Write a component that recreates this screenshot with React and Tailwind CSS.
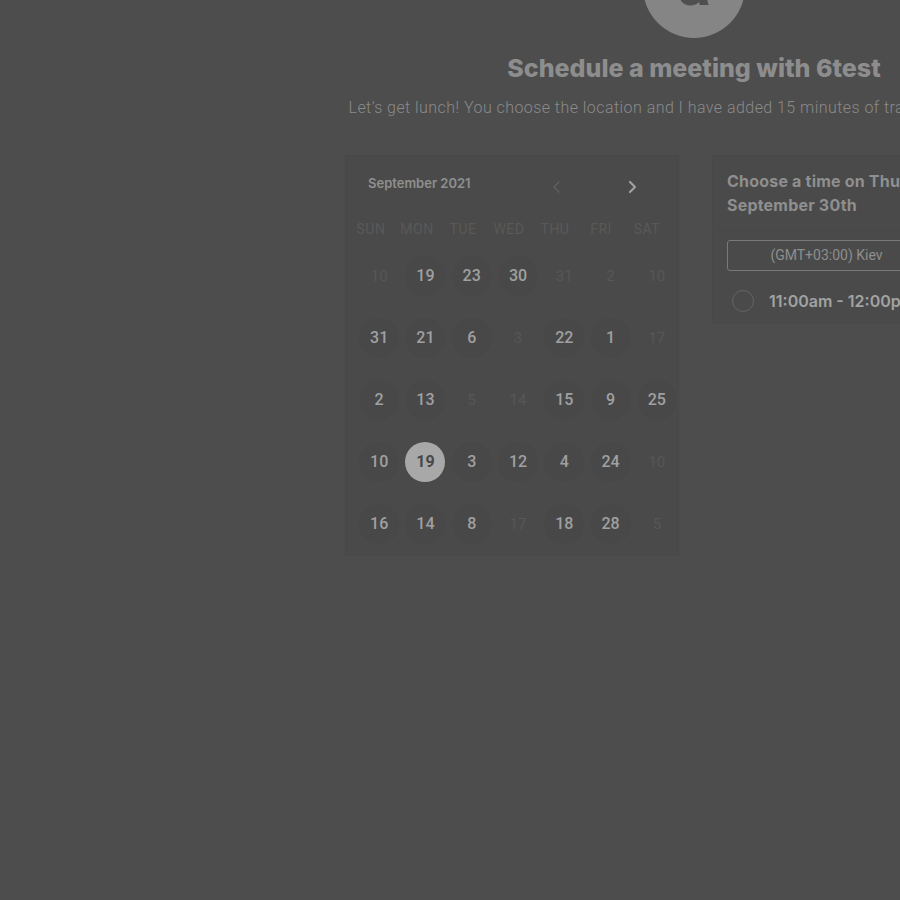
const weeks = [
  [[10, 'off'], [19], [23], [30], [31, 'off'], [2, 'off'], [10, 'off']],
  [[31], [21], [6], [3, 'off'], [22], [1], [17, 'off']],
  [[2], [13], [5, 'off'], [14, 'off'], [15], [9], [25]],
  [[10], [19, 'sel'], [3], [12], [4], [24], [10, 'off']],
  [[16], [14], [8], [17, 'off'], [18], [28], [5, 'off']],
];

const weekdays = ['SUN', 'MON', 'TUE', 'WED', 'THU', 'FRI', 'SAT'];

function Day({ n, state }) {
  if (state === 'off') {
    return (
      <div className="h-[62px] flex items-center justify-center">
        <span className="text-[15px] text-[#575757]">{n}</span>
      </div>
    );
  }
  if (state === 'sel') {
    return (
      <div className="h-[62px] flex items-center justify-center">
        <span className="w-10 h-10 rounded-full bg-[#a8a8a8] flex items-center justify-center text-[16px] font-bold text-[#484848]">
          {n}
        </span>
      </div>
    );
  }
  return (
    <div className="h-[62px] flex items-center justify-center">
      <span className="w-10 h-10 rounded-full bg-[#484848] flex items-center justify-center text-[16px] font-medium text-[#a0a0a0]">
        {n}
      </span>
    </div>
  );
}

function Chevron({ dir, color, width }) {
  return (
    <svg width="12" height="14" viewBox="0 0 12 14" fill="none">
      <path
        d={dir === 'left' ? 'M8 2 L3 7 L8 12' : 'M4 2 L9 7 L4 12'}
        stroke={color}
        strokeWidth={width}
        strokeLinecap="round"
        strokeLinejoin="round"
      />
    </svg>
  );
}

export default function App() {
  return (
    <div className="w-[900px] h-[900px] overflow-hidden bg-[#4d4d4d] font-['Inter',sans-serif]">
      <div className="w-[1388px] flex flex-col items-center">
        <div className="w-[102px] h-[102px] mt-[-64px] rounded-full bg-[#858585] flex items-start justify-center overflow-hidden">
          <span className="mt-[17px] text-[62px] leading-[62px] font-bold text-[#4f4f4f] font-['Roboto',sans-serif]">a</span>
        </div>

        <h1 className="mt-[14px] text-[25px] leading-[32px] font-extrabold text-[#8d8d8d]">
          Schedule a meeting with 6test
        </h1>

        <p className="mt-[13px] text-[16px] leading-[22px] font-light tracking-[0.45px] text-[#8a8a8a] font-['Roboto',sans-serif]">
          Let’s get lunch! You choose the location and I have added 15 minutes of travel time each way.
        </p>

        <div className="mt-[36px] flex gap-[33px] items-start">
          <div className="w-[334px] bg-[#4a4a4a] border border-[#484848] pt-[19px]">
            <div className="flex items-center pl-[22px] h-[18px]">
              <span className="text-[13px] font-semibold text-[#8f8f8f]">September 2021</span>
              <div className="ml-[80px] mt-[6px]">
                <Chevron dir="left" color="#5f5f5f" width={1.5} />
              </div>
              <div className="ml-[63px] mt-[6px]">
                <Chevron dir="right" color="#a0a0a0" width={2.2} />
              </div>
            </div>

            <div className="ml-[2px] mt-[26px] grid grid-cols-7 w-[322px]">
              {weekdays.map((d) => (
                <span
                  key={d}
                  className="text-center text-[14px] leading-[20px] tracking-[0.5px] text-[#595959] font-['Roboto',sans-serif]"
                >
                  {d}
                </span>
              ))}
            </div>

            <div className="ml-[10px] mt-[6px] w-[324px] grid grid-cols-7 font-['Roboto',sans-serif]">
              {weeks.map((row, i) =>
                row.map(([n, state], j) => <Day key={i + '-' + j} n={n} state={state} />)
              )}
            </div>
          </div>

          <div className="w-[331px] bg-[#4a4a4a] border border-[#484848]">
            <div className="px-[14px] pt-[13px] pb-[14px] border-b border-[#484848]">
              <p className="text-[16px] leading-[24px] font-bold tracking-[0.2px] text-[#8f8f8f]">
                Choose a time on Thursday,
                <br />
                September 30th
              </p>
            </div>
            <div className="px-[14px] pt-[8px] pb-[10px]">
              <div className="w-[199px] h-[31px] border border-[#7a7a7a] rounded-[3px] flex items-center justify-center text-[14px] text-[#8e8e8e] font-['Roboto',sans-serif]">
                (GMT+03:00) Kiev
              </div>
              <div className="mt-[18px] ml-[5px] flex items-center gap-[15px]">
                <span className="w-[22px] h-[22px] rounded-full border-[1.5px] border-[#636363]" />
                <span className="text-[16px] font-semibold text-[#a2a2a2]">11:00am - 12:00pm</span>
              </div>
            </div>
          </div>
        </div>
      </div>
    </div>
  );
}
